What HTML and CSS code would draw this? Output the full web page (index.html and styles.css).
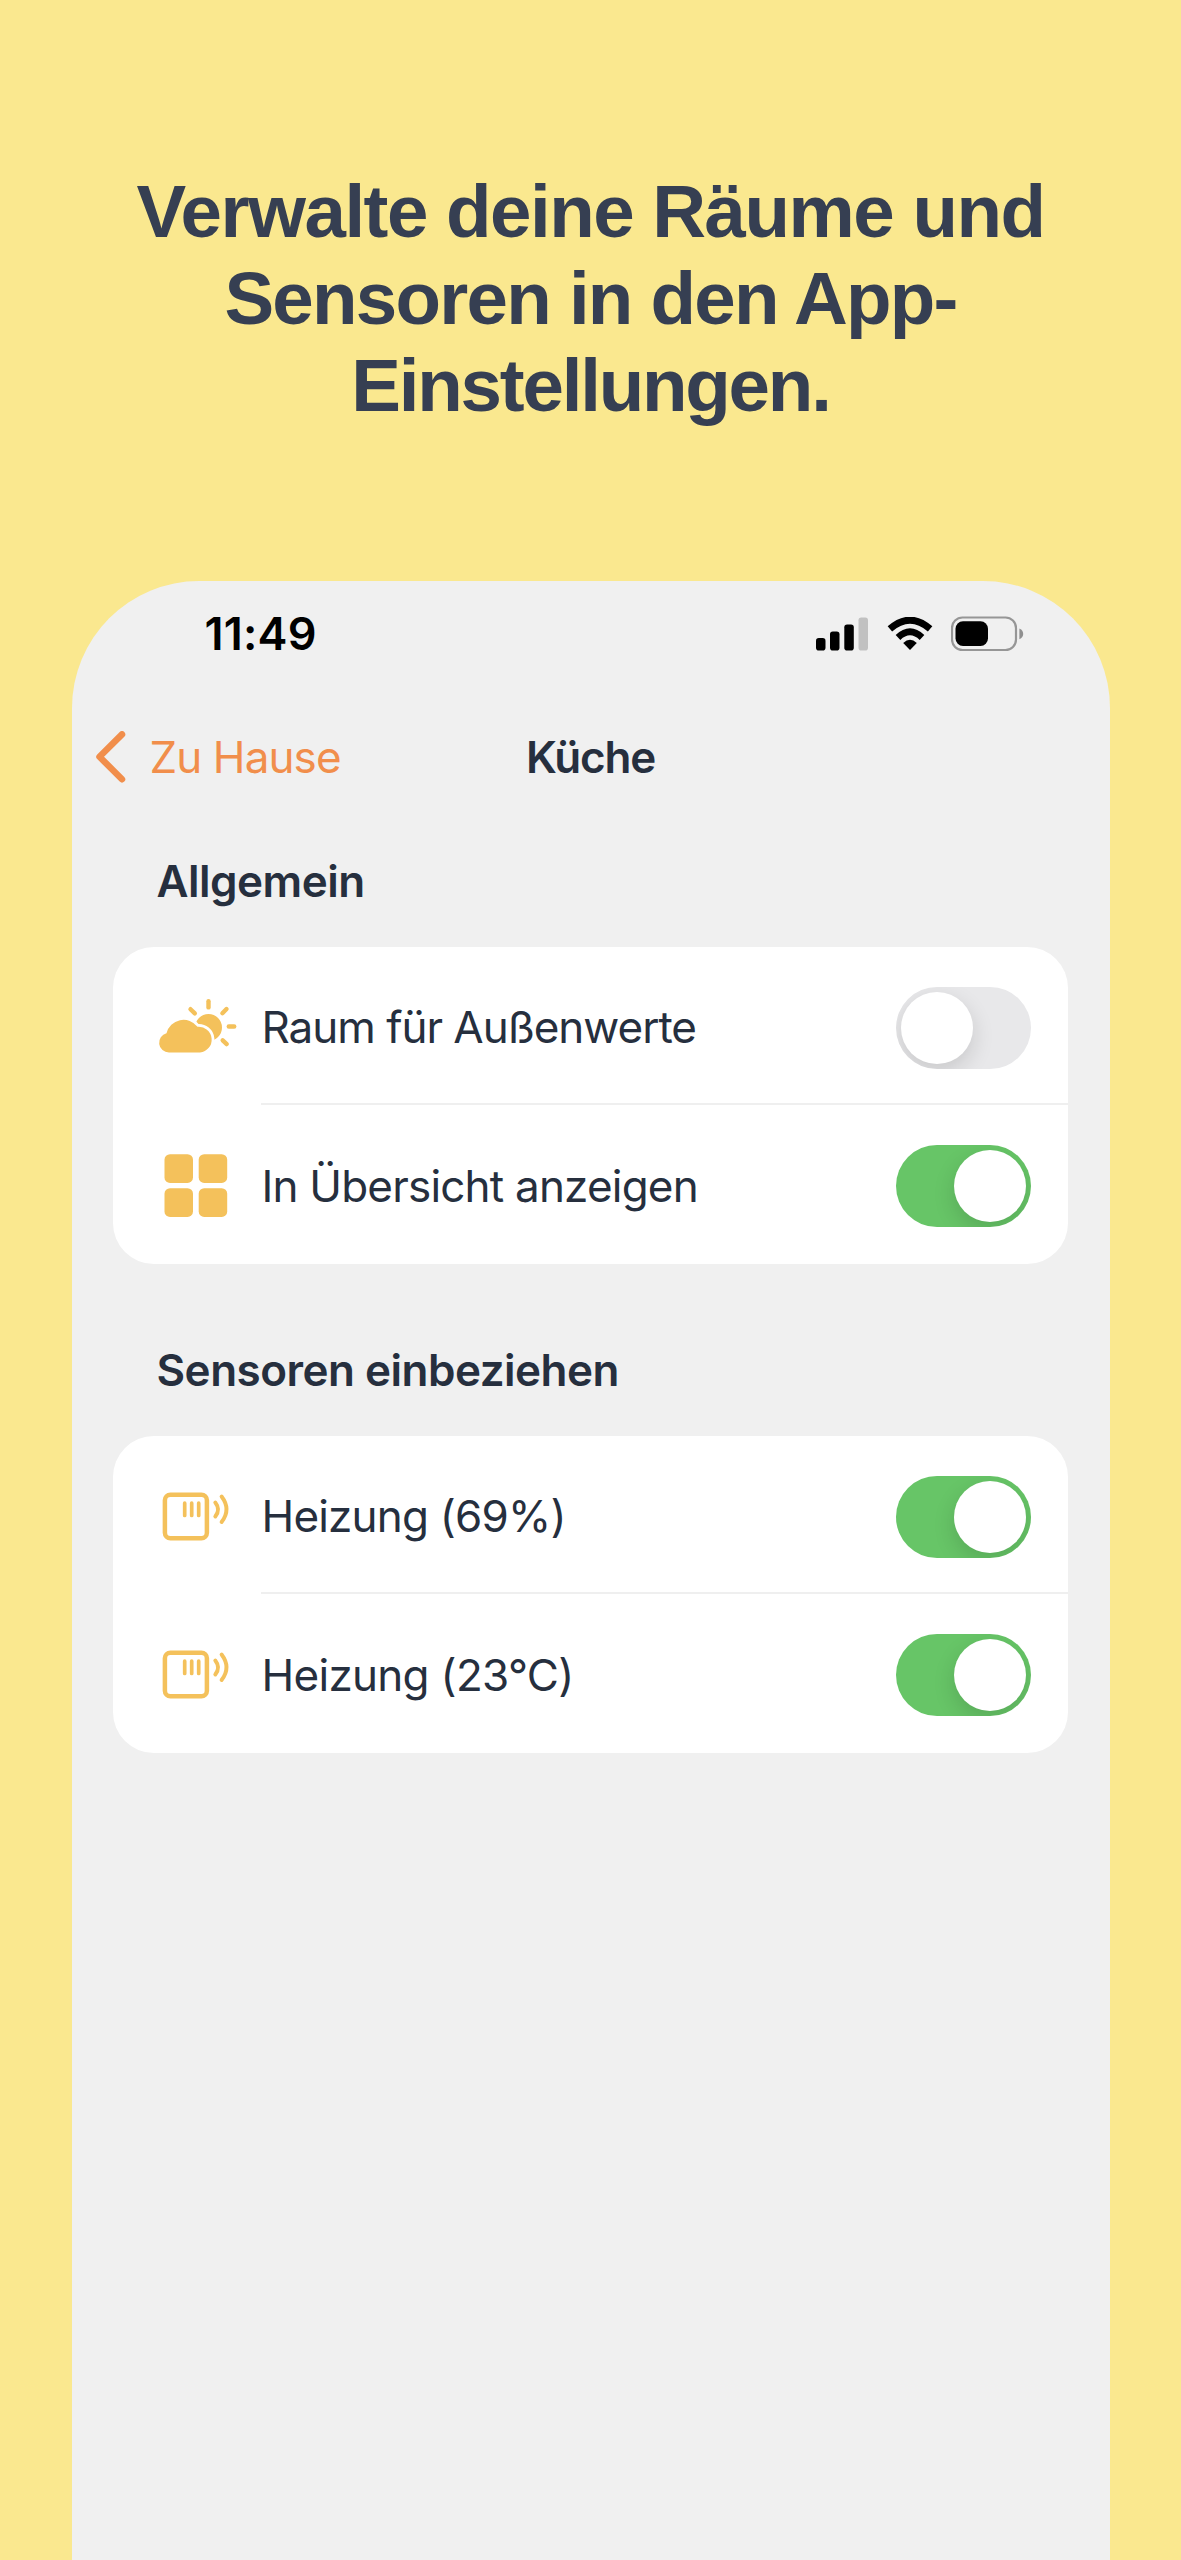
FILE: index.html
```
<!DOCTYPE html>
<html lang="de">
<head>
  <meta charset="UTF-8" />
  <meta name="viewport" content="width=device-width, initial-scale=1.0"/>
  <title>Küche</title>
  <link rel="stylesheet" href="styles.css">
</head>
<body>

  <h1 class="headline"><span class="line1">Verwalte deine Räume und</span><br><span class="line2">Sensoren in den App-</span><br><span class="line3">Einstellungen.</span></h1>

  <div class="phone">

    <div class="statusbar">
      <span class="time">11:49</span>
      <div class="status-icons">
        <svg class="signal" width="52" height="34" viewBox="0 0 52 34">
          <rect x="0" y="21" width="9.5" height="12.5" rx="2.8"/>
          <rect x="14" y="14.5" width="9.5" height="19" rx="2.8"/>
          <rect x="28.3" y="7.5" width="9.5" height="26" rx="2.8"/>
          <rect x="42.5" y="0.5" width="9.5" height="33" rx="2.8" fill="#c1c1c1"/>
        </svg>
        <svg class="wifi" width="46" height="34" viewBox="0 0 46 34">
          <path d="M23 33 L16.2 26 Q23 19.4 29.8 26 Z"/>
          <path d="M11 20.4 Q23 9.2 35 20.4" fill="none" stroke="#000" stroke-width="6.8"/>
          <path d="M2.9 11.9 Q23 -5.6 43.1 11.9" fill="none" stroke="#000" stroke-width="6.8"/>
        </svg>
        <svg class="battery" width="73" height="36" viewBox="0 0 73 36">
          <rect x="1" y="1.5" width="64" height="32.5" rx="10.5" fill="none" stroke="#969696" stroke-width="2.2"/>
          <rect x="4.5" y="5.3" width="32.5" height="24.7" rx="7.5"/>
          <path d="M68.4 12.5 Q72.2 14.5 72.2 17.9 Q72.2 21.3 68.4 23.3 Z" fill="#8f8f8f"/>
        </svg>
      </div>
    </div>

    <div class="navbar">
      <a class="back">
        <svg width="30" height="52" viewBox="0 0 30 52">
          <path d="M26 3.4 L3.5 25.8 L26 48.2" fill="none" stroke="#f18e4b" stroke-width="6.5" stroke-linecap="round" stroke-linejoin="round"/>
        </svg>
        <span class="back-label">Zu Hause</span>
      </a>
      <span class="title">Küche</span>
    </div>

    <h2 class="section-title general">Allgemein</h2>
    <div class="card">
      <div class="row">
        <div class="icon">
          <svg width="80" height="60" viewBox="0 0 80 60" fill="#f4c15b">
            <circle cx="50.5" cy="29.5" r="13.5"/>
            <g stroke="#f4c15b" stroke-width="4.4" stroke-linecap="round">
              <path d="M50.5 3.2 V9.4"/>
              <path d="M32.5 11.2 L36.8 15.4"/>
              <path d="M68.5 11 L64.4 15.2"/>
              <path d="M70.8 28.5 H76.2"/>
              <path d="M64.7 42.3 L68.7 46.1"/>
            </g>
            <path d="M11 54.5 A9.8 9.8 0 0 1 8.5 35.2 A17.5 17.5 0 0 1 39.5 28.8 A12.9 12.9 0 1 1 42 54.5 Z" stroke="#fff" stroke-width="5.5" paint-order="stroke"/>
          </svg>
        </div>
        <div class="content">
          <span class="label outdoor">Raum für Außenwerte</span>
          <span class="switch"></span>
        </div>
      </div>
      <div class="row">
        <div class="icon">
          <svg width="80" height="64" viewBox="0 0 80 64" fill="#f4c15b">
            <rect x="6.5" y="0.2" width="28.5" height="28.7" rx="5.5"/>
            <rect x="40.7" y="0.2" width="28.5" height="28.7" rx="5.5"/>
            <rect x="6.5" y="34.2" width="28.5" height="28.7" rx="5.5"/>
            <rect x="40.7" y="34.2" width="28.5" height="28.7" rx="5.5"/>
          </svg>
        </div>
        <div class="content">
          <span class="label overview">In Übersicht anzeigen</span>
          <span class="switch on"></span>
        </div>
      </div>
    </div>

    <h2 class="section-title sensors">Sensoren einbeziehen</h2>
    <div class="card">
      <div class="row">
        <div class="icon">
          <svg width="80" height="50" viewBox="0 0 80 50" fill="none" stroke="#f4c15b" stroke-linecap="round">
            <rect x="6.9" y="2.7" width="42" height="43.5" rx="5.5" stroke-width="4.5"/>
            <path d="M26.7 11.2 V23.5 M33.7 11.2 V23.5 M40.7 11.2 V23.5" stroke-width="3.7"/>
            <path d="M57.3 10.5 Q62.8 17.5 57.3 24.5 M63.6 4.5 Q73.4 17.5 63.6 30" stroke-width="3.9"/>
          </svg>
        </div>
        <div class="content">
          <span class="label humidity">Heizung (69%)</span>
          <span class="switch on"></span>
        </div>
      </div>
      <div class="row">
        <div class="icon">
          <svg width="80" height="50" viewBox="0 0 80 50" fill="none" stroke="#f4c15b" stroke-linecap="round">
            <rect x="6.9" y="2.7" width="42" height="43.5" rx="5.5" stroke-width="4.5"/>
            <path d="M26.7 11.2 V23.5 M33.7 11.2 V23.5 M40.7 11.2 V23.5" stroke-width="3.7"/>
            <path d="M57.3 10.5 Q62.8 17.5 57.3 24.5 M63.6 4.5 Q73.4 17.5 63.6 30" stroke-width="3.9"/>
          </svg>
        </div>
        <div class="content">
          <span class="label temperature">Heizung (23°C)</span>
          <span class="switch on"></span>
        </div>
      </div>
    </div>

  </div>

</body>
</html>
```

FILE: styles.css
```
* {
  box-sizing: border-box;
}

body {
  margin: 0;
  height: 2560px;
  overflow: hidden;
  display: flex;
  flex-direction: column;
  align-items: center;
  background: #fae88f;
  color: #262f3e;
  font-family: Inter, sans-serif;
}

.headline {
  margin: 0;
  padding-top: 168px;
  height: 581px;
  font-family: "Liberation Sans", Arial, sans-serif;
  font-size: 74.5px;
  line-height: 87px;
  font-weight: bold;
  text-align: center;
  white-space: nowrap;
  color: #363f52;
}

.line1 {
  letter-spacing: -1.5px;
}

.line2 {
  letter-spacing: -1.75px;
}

.line3 {
  letter-spacing: -2.2px;
}

.phone {
  width: 1038px;
  flex: 1;
  background: #f0f0f0;
  border-radius: 127px 127px 0 0;
}

.statusbar {
  display: flex;
  justify-content: space-between;
  height: 106px;
  padding: 26px 86px 0 133px;
}

.time {
  font-size: 45px;
  line-height: 54px;
  font-weight: 600;
  letter-spacing: 0.2px;
  color: #000;
}

.status-icons {
  display: flex;
  align-items: flex-start;
  padding-top: 10px;
}

.wifi {
  margin-left: 19px;
}

.battery {
  margin-top: -1px;
  margin-left: 18px;
}

.navbar {
  display: grid;
  grid-template-columns: 1fr auto 1fr;
  align-items: center;
  height: 140px;
  padding: 0 24px;
  font-size: 44px;
  line-height: 54px;
}

.back {
  display: flex;
  align-items: center;
  gap: 24px;
  color: #f18e4b;
}

.back-label {
  letter-spacing: -0.9px;
}

.title {
  font-weight: 600;
  letter-spacing: -1.2px;
}

.section-title {
  margin: 0;
  padding-left: 85px;
  font-size: 44px;
  line-height: 54px;
  font-weight: 600;
  letter-spacing: -0.5px;
}

.general {
  padding-top: 27px;
  height: 120px;
}

.sensors {
  padding-top: 79px;
  height: 172px;
}

.card {
  width: 955px;
  height: 317px;
  margin-left: 41px;
  border-radius: 41px;
  background: #fff;
}

.row {
  display: flex;
  height: 158px;
}

.icon {
  width: 148px;
  padding: 5px 0 2px 45px;
  display: flex;
  align-items: center;
}

.content {
  flex: 1;
  display: flex;
  align-items: center;
  justify-content: space-between;
  padding: 5px 37px 0 0;
  border-bottom: 2px solid #efefef;
}

.row:last-child {
  height: 159px;
}

.row:last-child .content {
  border-color: transparent;
}

.label {
  padding: 0 0 1px 1px;
  font-size: 44px;
  line-height: 54px;
  letter-spacing: -0.8px;
  white-space: nowrap;
}

.outdoor {
  letter-spacing: -1.02px;
}

.temperature {
  letter-spacing: -0.7px;
}

.switch {
  display: flex;
  width: 135px;
  height: 82px;
  padding: 5px;
  border-radius: 41px;
  background: #e8e8ea;
  overflow: hidden;
}

.switch::before {
  content: "";
  width: 72px;
  height: 72px;
  border-radius: 50%;
  background: #fff;
  box-shadow: 0 8px 22px rgba(0, 0, 0, 0.14);
}

.switch.on {
  justify-content: flex-end;
  background: #67c567;
}
```
